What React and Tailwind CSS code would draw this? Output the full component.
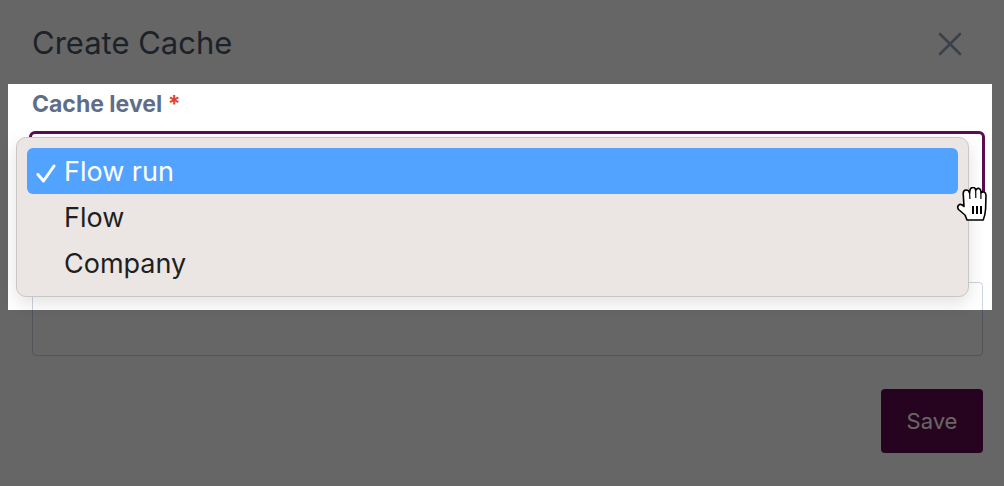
const options = ["Flow run", "Flow", "Company"];

const Check = () => (
  <svg width="22" height="20" viewBox="0 0 22 20" className="shrink-0">
    <path d="M3 11.5 L8.5 18 L19 3" fill="none" stroke="white" strokeWidth="3" strokeLinecap="round" strokeLinejoin="round" />
  </svg>
);

const CloseIcon = () => (
  <svg width="26" height="26" viewBox="0 0 26 26" className="text-[#94a3b8]">
    <path d="M3 3 L23 23 M23 3 L3 23" stroke="currentColor" strokeWidth="2.6" strokeLinecap="round" fill="none" />
  </svg>
);

const HandCursor = () => (
  <svg width="34" height="36" viewBox="0 0 34 36">
    <path
      d="M11 33 L9 28 L2.5 22.5 Q0.5 19.5 3.5 17.5 Q5.5 16.8 8 19.5 L7.2 6.5 Q7.2 3 10 3 Q13 3 13.6 6 L14 3 Q14.5 0.5 17 0.5 Q19.6 0.5 19.7 3.5 L19.9 3 Q21 1 23 1.4 Q25 2 24.9 4.5 L25.2 5.8 Q26.3 4.4 28 5 Q30 5.8 30 8.5 L29.6 22 Q29.2 28 27.2 33 Z"
      fill="white"
      stroke="black"
      strokeWidth="1.6"
      strokeLinejoin="round"
    />
    <path d="M13.6 6 L13.9 12 M19.7 3.5 L19.8 11 M24.9 4.5 L24.9 12" stroke="black" strokeWidth="1.2" fill="none" />
    <path d="M17 19 V27 M21 19 V27 M25 19 V27" stroke="black" strokeWidth="2" fill="none" />
  </svg>
);

export default function App() {
  return (
    <div className="relative w-[1004px] h-[486px] overflow-hidden bg-white font-['Inter',sans-serif]">
      <div className="pl-8 pr-[21px] pt-[23px]">
        <div className="flex items-center justify-between">
          <h2 className="text-[31px] leading-[40px] text-[#4a5568]">Create Cache</h2>
          <div className="mr-[20px] mt-[2px]">
            <CloseIcon />
          </div>
        </div>

        <label className="mt-[27px] block text-[23px] leading-[28px] font-bold text-[#5e6e8a]">
          Cache level <span className="text-[#e2432e]">*</span>
        </label>
        <div className="mt-[13px] ml-[-3px] mr-[-2px] h-[74px] rounded-md border-[3px] border-[#5a0e50]" />

        <div className="mt-[77px] h-[74px] rounded-[4px] border border-[#cbd5e1]" />

        <div className="mt-[33px] flex justify-end">
          <button className="h-[64px] w-[102px] rounded-[4px] bg-[#5f0c50] text-[22px] text-white">Save</button>
        </div>
      </div>

      <div className="pointer-events-none absolute left-[8px] top-[84px] h-[226px] w-[984px] shadow-[0_0_0_2000px_rgba(0,0,0,0.6)]" />

      <div className="absolute left-[16px] top-[137px] w-[953px] rounded-[10px] border border-[#c9c6c4] bg-[#ebe6e3] p-[10px] shadow-[0_6px_18px_rgba(0,0,0,0.12)]">
        {options.map((opt, i) => (
          <div
            key={opt}
            className={
              i === 0
                ? "flex h-[46px] items-center gap-[7px] rounded-[6px] bg-[#52a2ff] pl-[8px] pt-[3px] text-[27px] text-white"
                : "flex h-[46px] items-center gap-[7px] pl-[8px] pt-[3px] text-[27px] text-[#1f1f1f]"
            }
          >
            {i === 0 ? <Check /> : <span className="w-[22px] shrink-0" />}
            <span>{opt}</span>
          </div>
        ))}
      </div>

      <div className="pointer-events-none absolute left-[956px] top-[187px]">
        <HandCursor />
      </div>
    </div>
  );
}
